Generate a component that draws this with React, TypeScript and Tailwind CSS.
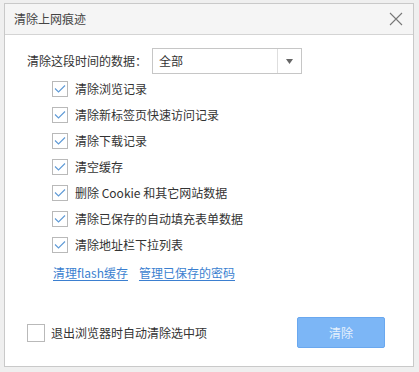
import React from "react";

const font = { fontFamily: '"Microsoft YaHei", "Noto Sans CJK SC", "Noto Sans", sans-serif' };

function Check({ checked }: { checked: boolean }) {
  return (
    <span className="flex h-[16px] w-[16px] shrink-0 items-center justify-center border border-[#b9b9b9] bg-white">
      {checked && (
        <svg width="12" height="10" viewBox="0 0 12 10">
          <path d="M1 4.5 L4.5 8 L11 1.5" fill="none" stroke="#5f9ad6" strokeWidth="1.1" />
        </svg>
      )}
    </span>
  );
}

const items = [
  "清除浏览记录",
  "清除新标签页快速访问记录",
  "清除下载记录",
  "清空缓存",
  "删除 Cookie 和其它网站数据",
  "清除已保存的自动填充表单数据",
  "清除地址栏下拉列表",
];

export default function App() {
  return (
    <div className="h-[372px] w-[419px] bg-[#efefef] pl-[4px] pt-[3px]" style={font}>
      <div className="flex h-[364px] w-[410px] flex-col border border-[#c9c9c9] bg-white">
        <div className="flex h-[31px] items-center justify-between border-b border-[#d4d4d4] bg-[#f5f5f5] pl-[9px] pr-[10px]">
          <span className="text-[12px] text-[#444]">清除上网痕迹</span>
          <svg width="14" height="14" viewBox="0 0 14 14">
            <path d="M1 1 L13 13 M13 1 L1 13" stroke="#777" strokeWidth="1.1" />
          </svg>
        </div>
        <div className="flex items-center pl-[22px] pt-[13px]">
          <span className="text-[12px] text-[#333]">清除这段时间的数据：</span>
          <div className="ml-[5px] flex h-[26px] w-[150px] items-center border border-[#c6c6c6] bg-white">
            <span className="flex-1 pl-[6px] text-[12px] text-[#333]">全部</span>
            <span className="flex h-full w-[24px] items-center justify-center border-l border-[#dedede]">
              <svg width="7" height="5" viewBox="0 0 7 5">
                <path d="M0 0 L7 0 L3.5 5 Z" fill="#666" />
              </svg>
            </span>
          </div>
        </div>
        <div className="flex flex-col pl-[47px] pt-[2px]">
          {items.map((t) => (
            <div key={t} className="flex h-[26px] items-center gap-[7px]">
              <Check checked />
              <span className="text-[12px] leading-[16px] text-[#333]">{t}</span>
            </div>
          ))}
        </div>
        <div className="flex gap-[11px] pl-[48px] pt-[6px] text-[12px] text-[#3b7fd0]">
          <span className="underline underline-offset-2">清理flash缓存</span>
          <span className="underline underline-offset-2">管理已保存的密码</span>
        </div>
        <div className="mt-auto flex items-center justify-between pb-[18px] pl-[22px] pr-[28px]">
          <div className="flex items-center gap-[6px]">
            <span className="block h-[18px] w-[18px] border border-[#b9b9b9] bg-white" />
            <span className="text-[12px] text-[#333]">退出浏览器时自动清除选中项</span>
          </div>
          <button className="h-[31px] w-[88px] rounded-[2px] border border-[#6aa8ef] bg-[#7cb6f6] text-[12px] text-[#e6f1fd]">
            清除
          </button>
        </div>
      </div>
    </div>
  );
}
